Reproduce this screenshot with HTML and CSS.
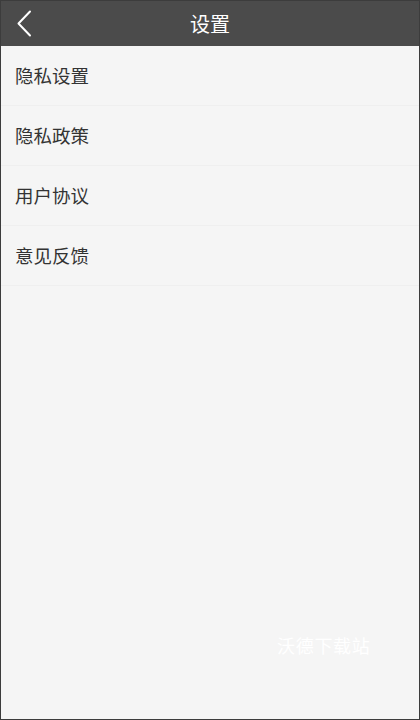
FILE: index.html
```html
<!DOCTYPE html>
<html lang="zh-CN">
<head>
<meta charset="utf-8">
<link rel="stylesheet" href="styles.css">
</head>
<body>
<div class="app">
  <header class="bar">
    <svg class="back" width="20" height="28" viewBox="0 0 20 28"><path d="M16 1.5 L4.5 13.5 L16 25.5" fill="none" stroke="#fff" stroke-width="2" stroke-linecap="round" stroke-linejoin="round"/></svg>
    <h1 class="title">设置</h1>
  </header>
  <ul class="list">
    <li class="row">隐私设置</li>
    <li class="row">隐私政策</li>
    <li class="row">用户协议</li>
    <li class="row">意见反馈</li>
  </ul>
  <div class="mark">沃德下载站</div>
</div>
</body>
</html>
```
FILE: styles.css
```css
html, body { margin: 0; padding: 0; }
body { font-family: "Noto Sans CJK SC", "Noto Sans", sans-serif; }
.app {
  position: relative;
  width: 420px;
  height: 720px;
  box-sizing: border-box;
  border: 1px solid #3c3c3c;
  background: #f5f5f5;
  overflow: hidden;
}
.bar {
  height: 45px;
  background: #4b4b4b;
  display: flex;
  align-items: center;
  justify-content: center;
  position: relative;
}
.back { position: absolute; left: 13px; top: 9px; }
.title {
  margin: 0;
  font-size: 20px;
  font-weight: normal;
  color: #fff;
  line-height: 1;
}
.list { list-style: none; margin: 0; padding: 0; }
.row {
  height: 59px;
  border-bottom: 1px solid #efefef;
  display: flex;
  align-items: center;
  padding-left: 14px;
  padding-bottom: 2px;
  box-sizing: content-box;
  font-size: 18.5px;
  color: #333;
}
.row { height: 57px; }
.mark {
  position: absolute;
  left: 276px;
  top: 631px;
  font-size: 18px;
  color: #fff;
  letter-spacing: 0.7px;
}
```
